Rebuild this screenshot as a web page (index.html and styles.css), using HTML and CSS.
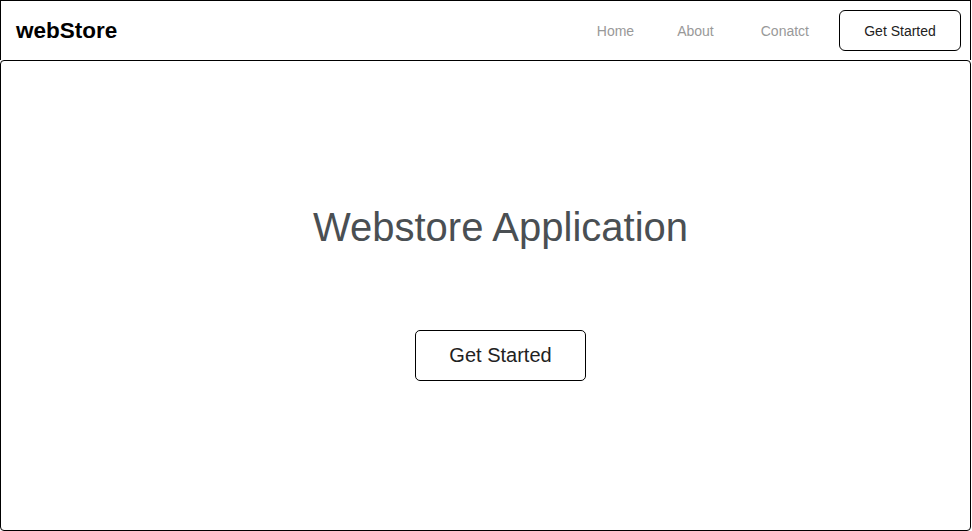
FILE: index.html
```html
<!DOCTYPE html>
<html lang="en">
<head>
<meta charset="utf-8">
<title>webStore</title>
<link rel="stylesheet" href="styles.css">
</head>
<body>
<div class="page">
  <header class="nav">
    <div class="logo">webStore</div>
    <nav class="links">
      <a class="link" href="#">Home</a>
      <a class="link" href="#">About</a>
      <a class="link link-wide" href="#">Conatct</a>
      <button class="btn btn-nav">Get Started</button>
    </nav>
  </header>
  <main class="hero">
    <h1 class="title">Webstore Application</h1>
    <button class="btn btn-hero">Get Started</button>
  </main>
</div>
</body>
</html>
```

FILE: styles.css
```css
* { box-sizing: border-box; }
html, body { margin: 0; padding: 0; background: #fff; }
body { font-family: "Liberation Sans", Arial, sans-serif; }
.page { width: 971px; display: flex; flex-direction: column; }
.nav {
  height: 60px;
  border: 1px solid #000;
  border-bottom: none;
  display: flex;
  align-items: center;
  justify-content: space-between;
  padding: 0 9px 0 15px;
}
.logo { font-size: 22.5px; font-weight: bold; color: #000; }
.links { display: flex; align-items: center; }
.link {
  font-size: 14px;
  color: #999;
  text-decoration: none;
  margin-right: 43px;
}
.link-wide { margin-left: 4px; margin-right: 30px; }
.btn {
  font-family: "Liberation Sans", Arial, sans-serif;
  background: #fff;
  border: 1px solid #000;
  color: #222;
  cursor: pointer;
}
.btn-nav {
  width: 122px;
  height: 41px;
  border-radius: 6px;
  font-size: 14px;
  padding: 0;
}
.hero {
  height: 471px;
  border: 1px solid #000;
  border-radius: 4px;
  display: flex;
  flex-direction: column;
  align-items: center;
  padding: 143px 0 0 30px;
}
.title {
  margin: 0;
  font-size: 40px;
  font-weight: normal;
  line-height: 46px;
  color: #4a4f53;
}
.btn-hero {
  margin-top: 80px;
  width: 171px;
  height: 51px;
  border-radius: 5px;
  font-size: 20px;
  padding: 0;
}
```
